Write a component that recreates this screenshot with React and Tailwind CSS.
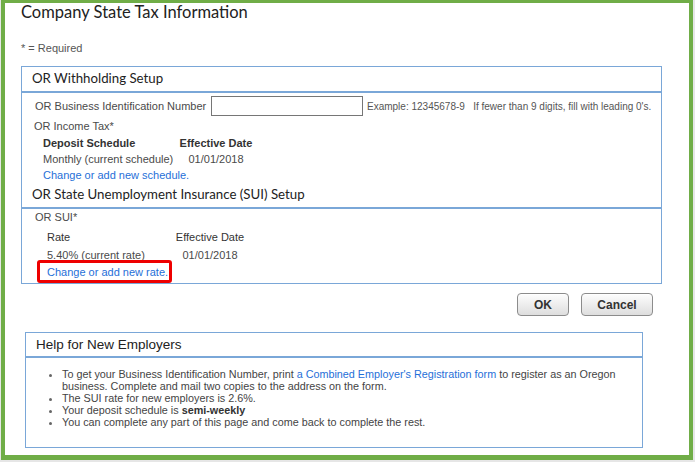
const arial = { fontFamily: '"Liberation Sans", Arial, sans-serif' };
const heading = { fontFamily: 'Lato, "Open Sans", sans-serif' };

function SectionHeader({ children, className = '' }) {
  return (
    <div
      className={`flex items-center pl-[10px] border-b-2 border-[#7aa7d8] text-[13.25px] text-[#222] whitespace-nowrap ${className}`}
      style={heading}
    >
      {children}
    </div>
  );
}

function Button({ children, className = '' }) {
  return (
    <button
      className={`h-[23px] rounded-[4px] border border-[#8c8c8c] bg-gradient-to-b from-[#fdfdfd] to-[#dedede] text-[12px] font-bold text-[#333] shadow-[inset_0_1px_0_#fff] ${className}`}
    >
      {children}
    </button>
  );
}

export default function App() {
  return (
    <div className="w-[695px] h-[462px] bg-[#e6e6e6] pl-[1px] overflow-hidden" style={arial}>
      <div className="w-[692px] h-[460px] bg-white border-l-4 border-r-4 border-t-[3px] border-b-[5px] border-[#70ad47] text-[#4a4a4a]">
        <h1 className="pl-[16px] mt-[-1px] text-[16.5px] leading-[20px] text-[#222]" style={heading}>
          Company State Tax Information
        </h1>

        <p className="pl-[16px] mt-[20px] text-[11px] leading-[12px] text-[#555]">* = Required</p>

        {/* withholding + SUI box */}
        <div className="ml-[16px] mt-[12px] w-[641px] border border-[#7aa7d8] text-[11px] whitespace-nowrap">
          <SectionHeader className="h-[26px]">OR Withholding Setup</SectionHeader>

          <div className="flex items-center h-[20px] mt-[3px] pl-[13px]">
            <span className="w-[176px]">OR Business Identification Number</span>
            <input className="w-[152px] h-[20px] border border-[#767676] bg-white outline-none" />
            <span className="ml-[4px] text-[10px] text-[#555]">
              Example: 12345678-9&nbsp;&nbsp;&nbsp;If fewer than 9 digits, fill with leading 0's.
            </span>
          </div>

          <div className="pl-[12px] mt-[2px] h-[17px] leading-[17px]">OR Income Tax*</div>
          <div className="flex pl-[21px] h-[16px] leading-[16px] font-bold text-[#333]">
            <span className="w-[130px]">Deposit Schedule</span>
            <span className="w-[86px] text-center">Effective Date</span>
          </div>
          <div className="flex pl-[21px] h-[16px] leading-[16px]">
            <span className="w-[130px]">Monthly (current schedule)</span>
            <span className="w-[86px] text-center">01/01/2018</span>
          </div>
          <div className="pl-[21px] h-[16px] leading-[16px]">
            <a className="text-[#1f6fd8]">Change or add new schedule.</a>
          </div>

          <SectionHeader className="h-[26px]">OR State Unemployment Insurance (SUI) Setup</SectionHeader>

          <div className="pl-[13px] h-[17px] leading-[17px]">OR SUI*</div>
          <div className="flex pl-[25px] mt-[2px] h-[18px] leading-[18px] text-[#333]">
            <span className="w-[120px]">Rate</span>
            <span className="w-[86px] text-center">Effective Date</span>
          </div>
          <div className="flex pl-[25px] h-[18px] leading-[18px]">
            <span className="w-[120px]">5.40% (current rate)</span>
            <span className="w-[86px] text-center">01/01/2018</span>
          </div>
          <div className="pl-[25px] h-[16px] leading-[16px] mb-[3px]">
            <span className="relative inline-block leading-[16px]">
              <a className="text-[#1f6fd8]">Change or add new rate.</a>
              <span className="absolute -left-[10px] -right-[4px] -top-[4px] -bottom-[3px] border-[3px] border-[#ee0000] rounded-[3px]" />
            </span>
          </div>
        </div>

        <div className="flex justify-end gap-[12px] mt-[9px] pr-[36px]">
          <Button className="w-[52px]">OK</Button>
          <Button className="w-[72px]">Cancel</Button>
        </div>

        {/* help box */}
        <div className="ml-[20px] mt-[16px] w-[618px] h-[116px] border border-[#7aa7d8]">
          <div className="flex items-center h-[25px] pl-[10px] pt-[2px] border-b-2 border-[#7aa7d8] text-[13.5px] text-[#222]">
            Help for New Employers
          </div>
          <ul className="mt-[10px] pl-[36px] list-disc text-[10.8px] leading-[12px] text-[#444] marker:text-[#666]">
            <li>
              To get your Business Identification Number, print{' '}
              <a className="text-[#1f6fd8]">a Combined Employer's Registration form</a> to register as an Oregon
              <br />
              business. Complete and mail two copies to the address on the form.
            </li>
            <li>The SUI rate for new employers is 2.6%.</li>
            <li>
              Your deposit schedule is <b className="text-[#333]">semi-weekly</b>
            </li>
            <li>You can complete any part of this page and come back to complete the rest.</li>
          </ul>
        </div>
      </div>
    </div>
  );
}
